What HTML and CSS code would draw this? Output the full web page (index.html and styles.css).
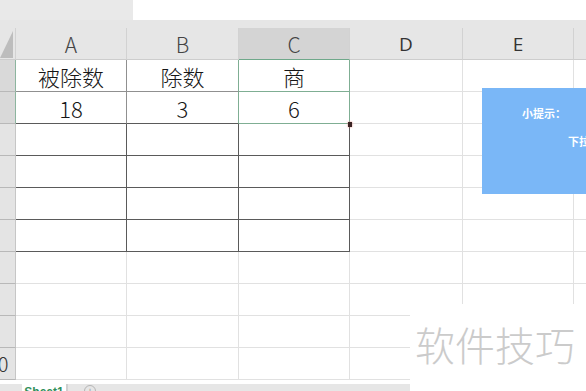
FILE: index.html
```html
<!DOCTYPE html>
<html lang="zh-CN">
<head>
    <meta charset="UTF-8">
    <title>除法表格</title>
    <link rel="stylesheet" href="styles.css">
</head>
<body>

    <!-- Toolbar remains above the sheet -->
    <div class="top">
        <div class="top-left"></div>
    </div>
    <div class="band"></div>

    <!-- The sheet itself -->
    <table class="grid">
        <colgroup>
            <col style="width: 16px">
            <col style="width: 111px">
            <col style="width: 112px">
            <col style="width: 111px">
            <col style="width: 113px">
            <col style="width: 111px">
            <col style="width: 80px">
        </colgroup>
        <tr class="hdr">
            <th class="corner"><span class="tri"></span></th>
            <th>A</th>
            <th class="sel-left">B</th>
            <th class="sel">C</th>
            <th class="en">D</th>
            <th class="en">E</th>
            <th class="en"></th>
        </tr>
        <tr>
            <th class="rh on"></th>
            <td class="t">被除数</td>
            <td class="t gl">除数</td>
            <td class="t s">商</td>
            <td></td><td></td><td></td>
        </tr>
        <tr>
            <th class="rh on"></th>
            <td class="t tb">18</td>
            <td class="t tb gl">3</td>
            <td class="t s">6</td>
            <td></td><td></td><td></td>
        </tr>
        <tr>
            <th class="rh"></th>
            <td class="b"></td><td class="b"></td><td class="b"></td>
            <td></td><td></td><td></td>
        </tr>
        <tr>
            <th class="rh"></th>
            <td class="b"></td><td class="b"></td><td class="b"></td>
            <td></td><td></td><td></td>
        </tr>
        <tr>
            <th class="rh"></th>
            <td class="b"></td><td class="b"></td><td class="b"></td>
            <td></td><td></td><td></td>
        </tr>
        <tr>
            <th class="rh"></th>
            <td class="b"></td><td class="b"></td><td class="b"></td>
            <td></td><td></td><td></td>
        </tr>
        <tr>
            <th class="rh"></th>
            <td></td><td></td><td></td><td></td><td></td><td></td>
        </tr>
        <tr>
            <th class="rh"></th>
            <td></td><td></td><td></td><td></td><td></td><td></td>
        </tr>
        <tr>
            <th class="rh"></th>
            <td></td><td></td><td></td><td></td><td></td><td></td>
        </tr>
        <tr>
            <th class="rh num">10</th>
            <td></td><td></td><td></td><td></td><td></td><td></td>
        </tr>
    </table>

    <!-- Sheet tabs -->
    <div class="tabs">
        <div class="tab">Sheet1</div>
        <div class="add">+</div>
    </div>

    <!-- Overlays -->
    <div class="handle"></div>

    <div class="tip">
        <p class="tip-title">小提示：</p>
        <p class="tip-line">下拉填充公式</p>
    </div>

    <div class="mark">软件技巧</div>

</body>
</html>
```

FILE: styles.css
```css
/* Page */
body {
    margin: 0;
    width: 586px;
    height: 391px;
    overflow: hidden;
    position: relative;
    background: #fff;
    font-family: "Noto Sans CJK SC", "Noto Sans", sans-serif;
    color: #2a2a2a;
}

/* Strip above the column headers */
.top {
    height: 20px;
    background: #fff;
}

.top-left {
    width: 133px;
    height: 20px;
    background: #e9e9e9;
}

.band {
    height: 8px;
    background: #e6e6e6;
}

/* Sheet grid */
.grid {
    table-layout: fixed;
    border-collapse: separate;
    border-spacing: 0;
    width: 654px;
}

.grid tr {
    height: 32px;
}

.grid th,
.grid td {
    padding: 0;
    box-sizing: border-box;
    border-right: 1px solid #e1e1e1;
    border-bottom: 1px solid #e1e1e1;
    overflow: hidden;
    white-space: nowrap;
    text-align: center;
    line-height: 30px;
}

/* Column headers */
.hdr th {
    background: #e6e6e6;
    font-weight: 300;
    font-size: 21px;
    color: #444;
    border-right-color: #d2d2d2;
    border-bottom-color: #cdcdcd;
}

.hdr th.sel {
    background: #d4d4d4;
    border-bottom-color: #6fa88a;
}

.hdr th.en {
    font-family: "Open Sans", sans-serif;
    font-weight: 400;
    font-size: 19px;
    color: #333;
}

.corner {
    position: relative;
}

.tri {
    position: absolute;
    left: 0;
    top: 3px;
    width: 13px;
    height: 27px;
    background: #bdbdbd;
    clip-path: polygon(100% 0, 100% 100%, 0 100%);
}

/* Row headers */
.grid th.rh {
    background: #e4e4e4;
    border-right-color: #c6c6c6;
    border-bottom-color: #b8b8b8;
}

.grid th.rh.on {
    background: #d9d9d9;
    border-right-color: #8db59f;
}

.grid th.num {
    text-align: left;
    text-indent: -13px;
    font-size: 20px;
    font-weight: 300;
    color: #333;
}

/* Filled cells */
.grid td.t {
    font-size: 22px;
    font-weight: 300;
    color: #161616;
    border-right-color: #909090;
    border-bottom-color: #909090;
}

.grid td.tb {
    border-bottom-color: #5a5a5a;
}

.grid td.gl {
    border-right-color: #7fae93;
}

.grid td.s {
    border-right-color: #7fae93;
    border-bottom-color: #7fae93;
}

/* Bordered empty rows */
.grid td.b {
    border-right-color: #5a5a5a;
    border-bottom-color: #5a5a5a;
}

/* Sheet tabs */
.tabs {
    margin-top: 4px;
    height: 7px;
    background: #e6e6e6;
    display: flex;
    overflow: hidden;
}

.tab {
    margin-left: 22px;
    width: 44px;
    background: #fff;
    border-right: 2px solid #d0d0d0;
    color: #2f8f5a;
    font-family: "Liberation Sans", sans-serif;
    font-size: 12px;
    font-weight: bold;
    line-height: 16px;
    text-align: center;
}

.add {
    margin-left: 16px;
    width: 10px;
    height: 10px;
    margin-top: 1px;
    border: 1px solid #b5b5b5;
    border-radius: 50%;
    color: #999;
    font-size: 10px;
    line-height: 10px;
    text-align: center;
}

/* Fill handle */
.handle {
    position: absolute;
    left: 348px;
    top: 122px;
    width: 4px;
    height: 5px;
    background: #3a2424;
    box-shadow: 0 0 2px #d9756b;
}

/* Tip card */
.tip {
    position: absolute;
    left: 482px;
    top: 88px;
    width: 140px;
    height: 106px;
    background: #7ab7f7;
    color: #fff;
    font-size: 11px;
    font-weight: bold;
    white-space: nowrap;
}

.tip p {
    margin: 0;
}

.tip-title {
    padding: 17px 0 0 40px;
}

.tip-line {
    padding: 12px 0 0 86px;
}

/* Watermark */
.mark {
    position: absolute;
    left: 410px;
    top: 304px;
    width: 176px;
    height: 87px;
    background: #fff;
    color: #cbcbcb;
    font-size: 40px;
    font-weight: 300;
    line-height: 40px;
    padding: 20px 0 0 5px;
    box-sizing: border-box;
    white-space: nowrap;
}
```
